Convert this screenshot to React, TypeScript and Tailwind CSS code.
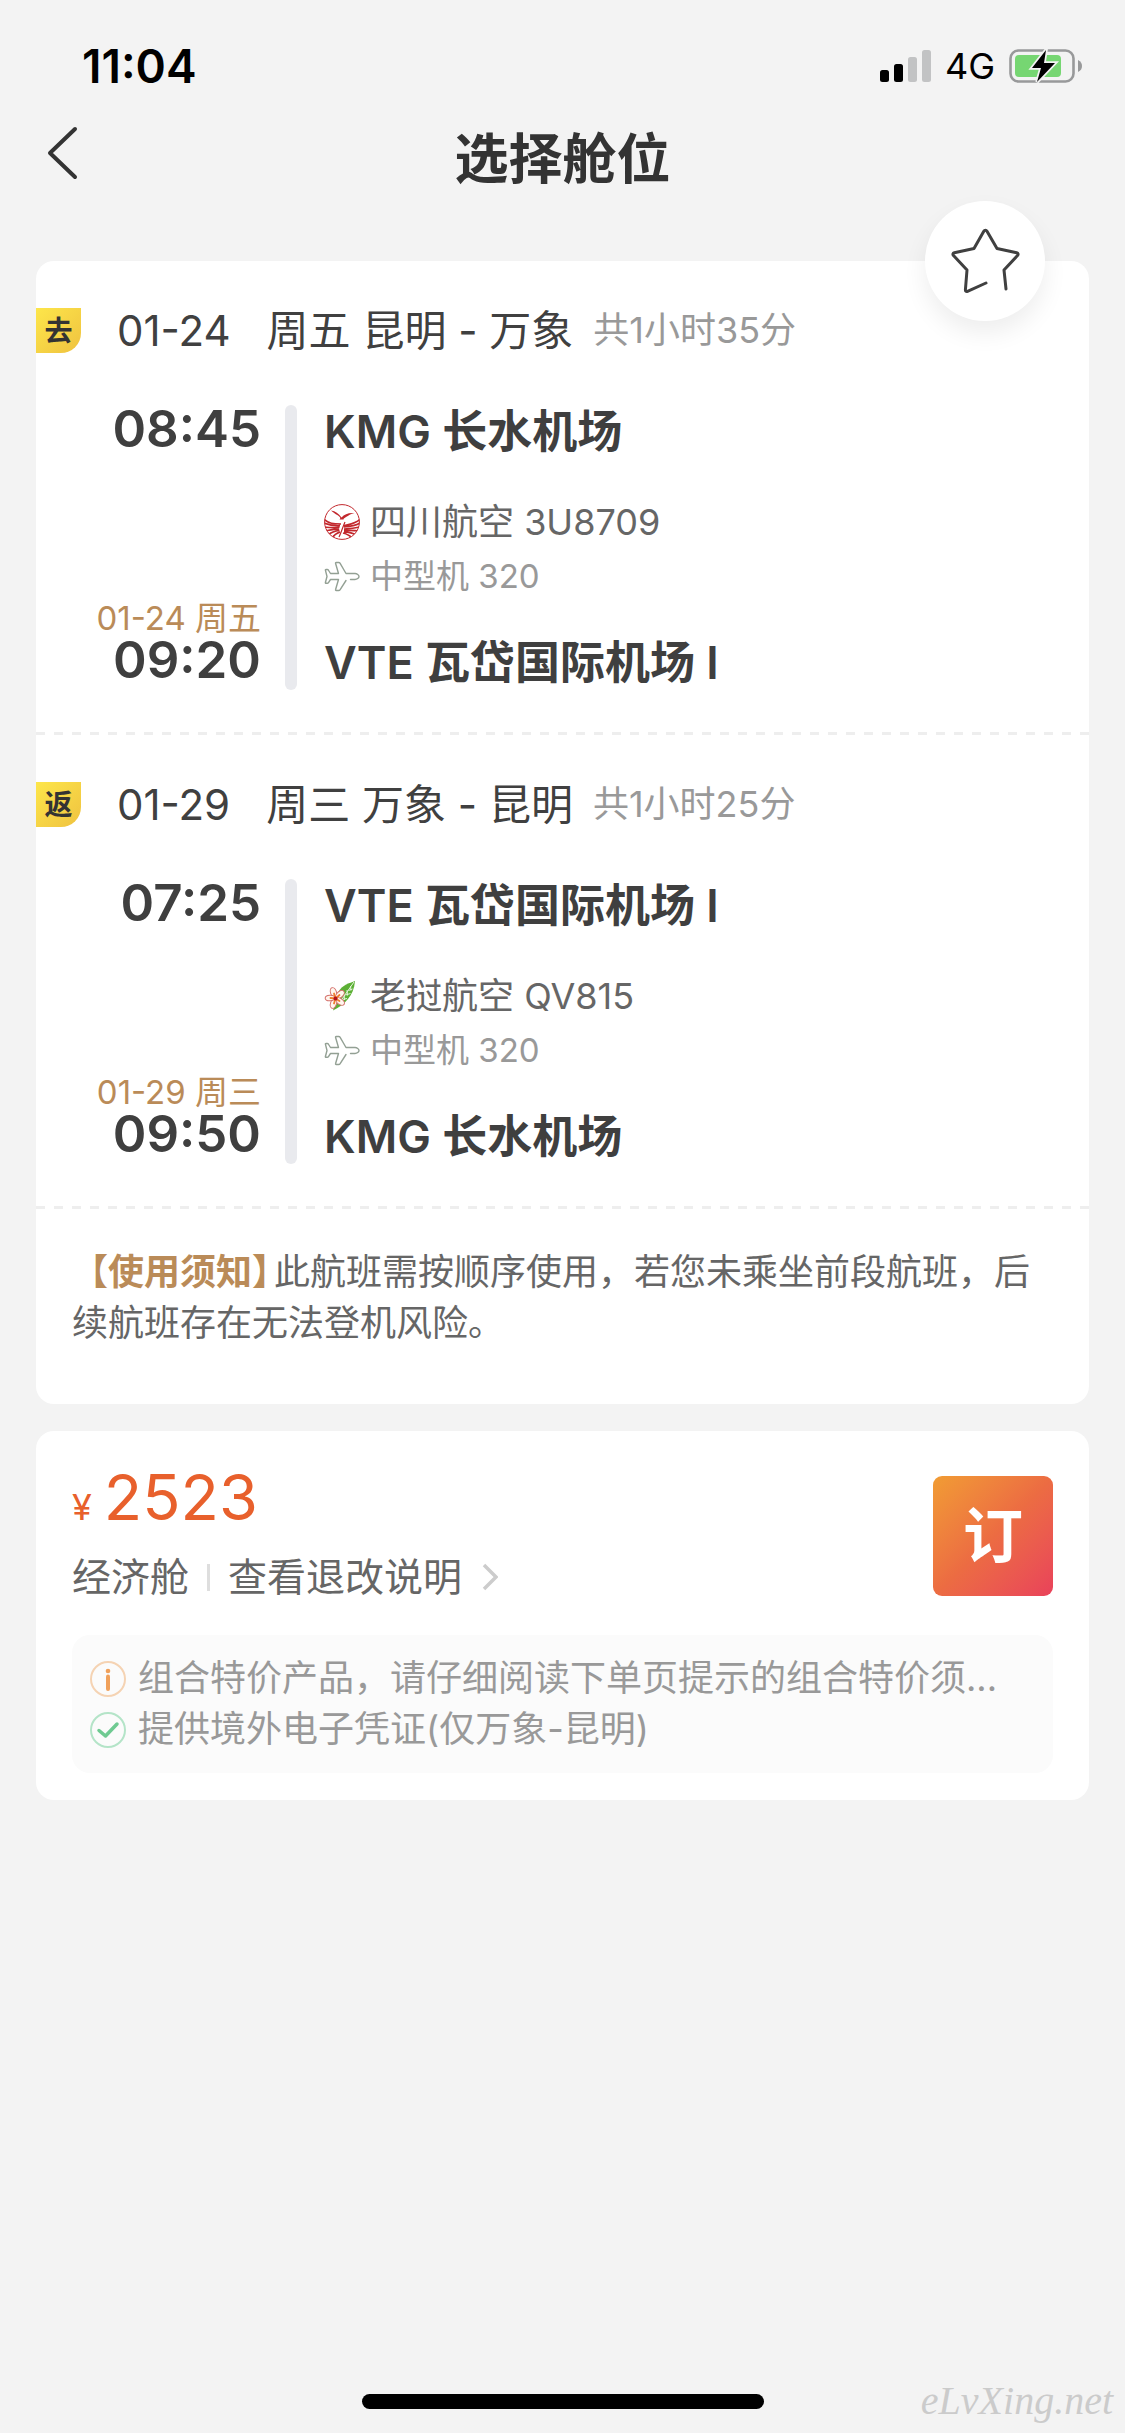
import type { ReactNode } from "react";

type Leg = {
  tag: string;
  date: string;
  route: string;
  duration: string;
  departTime: string;
  departAirport: string;
  arriveDate: string;
  arriveTime: string;
  arriveAirport: string;
  airline: string;
  logo: ReactNode;
  plane: string;
};

const SichuanLogo = () => (
  <svg viewBox="0 0 36 36" className="size-9 shrink-0" aria-hidden="true">
    <clipPath id="sichuan">
      <circle cx="18" cy="18" r="17.5" />
    </clipPath>
    <circle cx="18" cy="18" r="17.4" fill="#fff" stroke="#c2282d" />
    <path
      d="M7 6.500c4.500.5 7.500 3 10.500 7 3-3.500 7-5 13-4.500-4 1-6 2.500-8.500 4-1.500 1-2.500 1.500-2.500 2.500h-4c.6-.8 1-1.200.6-2C14 10.500 11 10.500 7 6.500z"
      fill="#c2282d"
    />
    <g clipPath="url(#sichuan)" fill="none" stroke="#c2282d" strokeWidth="1.7">
      <path d="M0 15.500c5 4 9 4.500 17 4.500M0 19c6 2.500 10 3 16 2.700M0 23c5 .5 10 .7 15.500.4M1 27c5-1 9-2 14-2.200M4 31c3-2.500 7-4 11.500-4.600M8 34c2-3 5-5 8-6" />
      <path d="M36 15.500c-5 4.500-9 4.500-16 6M36 19c-5 3-9 3.500-16 4M36 23c-5 1-9 1.500-16 2M35 27c-5-1-9-.8-15-.6M32 31c-3-2-7-3-12-3.200M28 34c-2-2.500-5-4-9-5" />
      <path d="M15 33c2-4 3-8 6-15" strokeWidth="1.200" />
    </g>
  </svg>
);

const LaoLogo = () => (
  <svg viewBox="0 0 36 36" className="size-9 shrink-0" aria-hidden="true">
    <path d="M31 3C22 6 16 9 13.500 16L9 32.500C20 27 30 18 31 3z" fill="#5cb035" />
    <path
      d="M30 4L16 24M26.500 8l.5 4.500M23 12l.5 5.500M20 16l.5 6M24.500 12.500l4-1.500M21.500 17l5-1.500M18.500 21.500l4.500-1"
      stroke="#e4f4da"
      fill="none"
    />
    <g fill="#fff6ee" stroke="#d4706c">
      <ellipse cx="9.500" cy="14.500" rx="3" ry="5" transform="rotate(-18 9.500 14.500)" />
      <ellipse cx="16" cy="16.500" rx="3" ry="5" transform="rotate(50 16 16.500)" />
      <ellipse cx="16" cy="23.500" rx="3" ry="5" transform="rotate(125 16 23.500)" />
      <ellipse cx="9.500" cy="25.500" rx="3" ry="5" transform="rotate(18 9.500 25.500)" />
      <ellipse cx="6" cy="20" rx="2.800" ry="4.800" transform="rotate(88 6 20)" />
    </g>
    <path
      d="M11.500 20.500l-1.500-5M11.500 20.500l4-3.500M11.500 20.500l4 2.500M11.500 20.500l-1.500 5M11.500 20.500l-5-.5"
      stroke="#ef7d2c"
      strokeWidth="1.800"
      strokeLinecap="round"
    />
    <circle cx="11.500" cy="20.500" r="2" fill="#b5121b" />
  </svg>
);

const PlaneIcon = () => (
  <svg viewBox="0 0 36 36" className="size-9 shrink-0" aria-hidden="true">
    <path
      d="M26.500 21.500H31c2 0 4-1.500 4-3s-2-3-4-3h-9L16 5.200c-.4-.6-.8-.7-1.300-.7h-2.500c-.6 0-.8.4-.6 1l2.900 10H6.500L4.300 12c-.3-.4-.6-.5-1-.5H2c-.5 0-.7.300-.6.700L3 18.500l-1.600 6c-.1.500.1.800.6.800h1.300c.4 0 .7-.1 1-.5l2.200-3.300h8l-2.900 10c-.2.600 0 1 .6 1h2.500c.5 0 .9-.1 1.300-.7L22 22.500"
      fill="none"
      stroke="#93a094"
      strokeWidth="1.400"
      strokeLinecap="round"
      strokeLinejoin="round"
    />
  </svg>
);

const InfoIcon = () => (
  <svg viewBox="0 0 36 36" className="size-9 shrink-0" aria-hidden="true">
    <circle cx="18" cy="18" r="17" fill="none" stroke="#f5d3b3" strokeWidth="2" />
    <circle cx="18" cy="10" r="2.300" fill="#f0a05a" />
    <path d="M18 15.500v12.500" stroke="#f0a05a" strokeWidth="4" strokeLinecap="round" />
  </svg>
);

const CheckIcon = () => (
  <svg viewBox="0 0 36 36" className="size-9 shrink-0" aria-hidden="true">
    <circle cx="18" cy="18" r="17" fill="none" stroke="#b4e4c8" strokeWidth="2" />
    <path
      d="M9 18.500l6.500 5.500L27 12"
      fill="none"
      stroke="#6fca92"
      strokeWidth="3.500"
      strokeLinecap="round"
      strokeLinejoin="round"
    />
  </svg>
);

const legs: Leg[] = [
  {
    tag: "去",
    date: "01-24",
    route: "周五 昆明 - 万象",
    duration: "共1小时35分",
    departTime: "08:45",
    departAirport: "KMG 长水机场",
    arriveDate: "01-24 周五",
    arriveTime: "09:20",
    arriveAirport: "VTE 瓦岱国际机场 I",
    airline: "四川航空 3U8709",
    logo: <SichuanLogo />,
    plane: "中型机 320",
  },
  {
    tag: "返",
    date: "01-29",
    route: "周三 万象 - 昆明",
    duration: "共1小时25分",
    departTime: "07:25",
    departAirport: "VTE 瓦岱国际机场 I",
    arriveDate: "01-29 周三",
    arriveTime: "09:50",
    arriveAirport: "KMG 长水机场",
    airline: "老挝航空 QV815",
    logo: <LaoLogo />,
    plane: "中型机 320",
  },
];

const StatusBar = () => (
  <div className="flex h-[117px] items-center justify-between pt-[15px] pl-[82px] pr-[42px] text-black">
    <span className="text-[46px] font-semibold">11:04</span>
    <div className="flex items-center gap-3.5">
      <svg viewBox="0 0 51 32" className="h-8 w-[51px]" aria-hidden="true">
        <rect y="20" width="9" height="12" rx="2.500" />
        <rect x="14" y="14" width="9" height="18" rx="2.500" />
        <rect x="28" y="7" width="9" height="25" rx="2.500" fill="#c2c3c4" />
        <rect x="42" width="9" height="32" rx="2.500" fill="#c2c3c4" />
      </svg>
      <span className="text-[36px]">4G</span>
      <svg viewBox="0 0 74 34" className="h-[34px] w-[74px]" aria-hidden="true">
        <rect x="1.500" y="1.500" width="63" height="31" rx="8" fill="none" stroke="#98999a" strokeWidth="2.600" />
        <path d="M69 11c3 1.500 4 3.500 4 6s-1 4.500-4 6z" fill="#98999a" />
        <rect x="6" y="6" width="46" height="22" rx="4" fill="#76d672" />
        <path
          d="M37 1L23 19h9l-4 14L46 14H35z"
          fill="#000"
          stroke="#f3f3f3"
          strokeWidth="3.500"
          paintOrder="stroke"
        />
      </svg>
    </div>
  </div>
);

const FlightLeg = ({ leg }: { leg: Leg }) => (
  <section>
    <div className="flex items-center pt-[47px] text-[#404040]">
      <span className="flex size-[45px] items-center justify-center rounded-br-[20px] bg-linear-to-br from-[#fde64a] to-[#efc240] text-[28px] font-bold text-[#333]">
        {leg.tag}
      </span>
      <h2 className="ml-9 flex gap-9 text-[42px] leading-[45px]">
        <span>{leg.date}</span>
        <span>{leg.route}</span>
      </h2>
      <span className="ml-5 text-[36px] leading-[45px] text-[#999]">{leg.duration}</span>
    </div>
    <div className="mt-13 flex gap-6 pb-[42px]">
      <div className="flex w-[225px] flex-col items-end pb-1.5">
        <span className="text-[51px] leading-12 font-semibold text-[#3f3f3f]">{leg.departTime}</span>
        <span className="mt-auto text-[33px] leading-9 text-[#ba8b58]">{leg.arriveDate}</span>
        <span className="text-[51px] leading-12 font-semibold text-[#3f3f3f]">{leg.arriveTime}</span>
      </div>
      <div className="w-3 rounded-full bg-[#e9eaee]" />
      <div className="pl-[3px] text-[#3f3f3f]">
        <h3 className="text-[45px] leading-[54px] font-semibold">{leg.departAirport}</h3>
        <p className="mt-[45px] flex items-center gap-2.5 text-[36px] leading-9 text-[#666]">
          {leg.logo}
          {leg.airline}
        </p>
        <p className="mt-[18px] flex items-center gap-2.5 text-[33px] leading-9 text-[#999]">
          <PlaneIcon />
          {leg.plane}
        </p>
        <h3 className="mt-[42px] text-[45px] leading-[54px] font-semibold">{leg.arriveAirport}</h3>
      </div>
    </div>
    {/* dashed divider */}
    <div className="h-[3px] bg-[repeating-linear-gradient(to_right,#eeeeee_0_9px,transparent_9px_18px)]" />
  </section>
);

const App = () => {
  return (
    <div
      lang="zh-CN"
      className="relative flex min-h-screen flex-col bg-[#f3f3f3] font-['Inter','Noto_Sans_CJK_SC',sans-serif]"
    >
      <StatusBar />
      <header className="grid h-[84px] grid-cols-[1fr_auto_1fr] items-center">
        <button type="button" aria-label="返回" className="h-full w-24 pb-3 pl-[46px]">
          <svg viewBox="0 0 32 54" className="h-[54px] w-8" aria-hidden="true">
            <path
              d="M29 3L4 27l25 24"
              fill="none"
              stroke="#333"
              strokeWidth="4"
              strokeLinecap="round"
              strokeLinejoin="round"
            />
          </svg>
        </button>
        <h1 className="text-[54px] font-semibold text-[#333]">选择舱位</h1>
      </header>

      <main className="flex flex-1 flex-col gap-[27px] px-9 pt-[60px]">
        <div className="relative rounded-[18px] bg-white">
          <button
            type="button"
            aria-label="收藏"
            className="absolute -top-[60px] right-11 size-[120px] rounded-full bg-white shadow-[0_12px_24px_rgba(0,0,0,0.07)]"
          >
            <svg viewBox="0 0 120 120" aria-hidden="true">
              <path
                d="M61 82l-18.500 8.300c-1.300.6-2.200 0-2.100-1.500L42 69 28.500 54.500c-1-1.200-.7-2.300.8-2.700L49 47.500l9.800-17.300c.8-1.400 2.400-1.400 3.200 0L72 47.500l19.700 4.300c1.500.4 1.800 1.500.8 2.700L79 69l2 19"
                fill="none"
                stroke="#404040"
                strokeWidth="3"
                strokeLinecap="round"
                strokeLinejoin="round"
              />
            </svg>
          </button>
          {legs.map((leg) => (
            <FlightLeg key={leg.date} leg={leg} />
          ))}
          <p className="px-9 pt-[38px] pb-[55px] text-[36px] leading-[51px] text-[#666]">
            <b className="mr-1 font-bold text-[#ba8b58]">
              【使用须知<span className="[font-feature-settings:'halt']">】</span>
            </b>
            此航班需按顺序使用，若您未乘坐前段航班，后续航班存在无法登机风险。
          </p>
        </div>

        <div className="rounded-[18px] bg-white px-9 pt-[33px] pb-[27px]">
          <div className="flex justify-between">
            <div>
              <p className="flex items-baseline gap-3 text-[#e8602c]">
                <span className="text-[36px] leading-9">¥</span>
                <span className="text-[63px] leading-[66px]">2523</span>
              </p>
              <div className="mt-5 flex items-center text-[39px] leading-[54px] text-[#666]">
                <span>经济舱</span>
                <span className="mx-[18px] h-[27px] w-[3px] bg-[#dedede]" />
                <a href="#" className="flex items-center gap-5">
                  查看退改说明
                  <svg viewBox="0 0 16 28" className="h-7 w-4" aria-hidden="true">
                    <path d="M2 2l12 12L2 26" fill="none" stroke="#ccc" strokeWidth="3.500" />
                  </svg>
                </a>
              </div>
            </div>
            <button
              type="button"
              className="mt-3 size-[120px] rounded-[9px] bg-linear-to-br from-[#f19c33] via-[#ec6c42] to-[#e9415a] text-[60px] font-bold text-white"
            >
              订
            </button>
          </div>
          <ul className="mt-[31px] rounded-[18px] bg-[#fbfbfb] p-[18px] text-[36px] leading-[51px] text-[#999]">
            <li className="flex items-center gap-3">
              <InfoIcon />
              <span>组合特价产品，请仔细阅读下单页提示的组合特价须...</span>
            </li>
            <li className="flex items-center gap-3">
              <CheckIcon />
              <span>提供境外电子凭证(仅万象-昆明)</span>
            </li>
          </ul>
        </div>
      </main>

      <footer className="flex justify-center pb-6">
        <div className="h-[15px] w-[402px] rounded-full bg-black" />
      </footer>
      <span className="absolute right-3 bottom-2 font-['Liberation_Serif',serif] text-[40px] leading-12 text-[#cbcbcb] italic">
        eLvXing.net
      </span>
    </div>
  );
};

export default App;
